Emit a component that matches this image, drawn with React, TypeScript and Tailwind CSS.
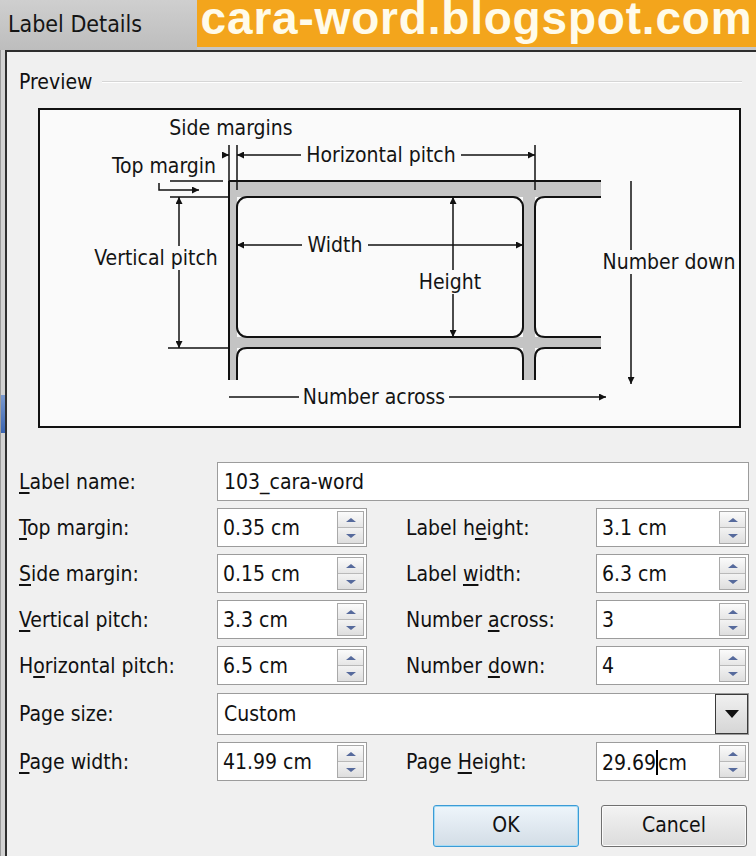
import React from "react";

const UI = "font-['DejaVu_Sans_Condensed','Liberation_Sans',sans-serif]";

function Lbl({ text, u }: { text: string; u?: number }) {
  if (u === undefined) return <span>{text}</span>;
  return (
    <span>
      {text.slice(0, u)}
      <span className="underline underline-offset-[3px]">{text[u]}</span>
      {text.slice(u + 1)}
    </span>
  );
}

function SpinBtns() {
  return (
    <div className="flex w-[27px] flex-col border border-[#a9a9a9] bg-[#f4f4f4]">
      <div className="flex flex-1 items-center justify-center border-b border-[#b9b9b9] bg-gradient-to-b from-[#fbfbfb] to-[#e6e6e6]">
        <div className="h-0 w-0 border-x-[5px] border-b-[4px] border-x-transparent border-b-[#566a9c]" />
      </div>
      <div className="flex flex-1 items-center justify-center bg-gradient-to-b from-[#f3f3f3] to-[#dedede]">
        <div className="h-0 w-0 border-x-[5px] border-t-[4px] border-x-transparent border-t-[#566a9c]" />
      </div>
    </div>
  );
}

function Spin({ value, wide, caret }: { value: string; wide?: boolean; caret?: boolean }) {
  return (
    <div
      className={
        "flex h-[39px] items-stretch border border-[#9c9c9c] bg-white py-[2px] pr-[2px] " +
        (wide ? "w-[153px]" : "w-[150px]")
      }
    >
      <div className="flex flex-1 items-center pl-[5px] pt-[2px] text-[21px] text-[#111]">
        {caret ? (
          <span>
            29.69<span className="inline-block h-[25px] w-[2px] translate-y-[5px] bg-black" />cm
          </span>
        ) : (
          value
        )}
      </div>
      <SpinBtns />
    </div>
  );
}

function Row({
  l,
  lu,
  lv,
  r,
  ru,
  rv,
  caret,
}: {
  l: string;
  lu?: number;
  lv: string;
  r: string;
  ru?: number;
  rv: string;
  caret?: boolean;
}) {
  return (
    <div className="flex h-[39px] items-center">
      <div className="w-[198px] pt-[2px] text-[21px] text-[#111]">
        <Lbl text={l} u={lu} />
      </div>
      <Spin value={lv} />
      <div className="ml-[39px] w-[190px] pt-[2px] text-[21px] text-[#111]">
        <Lbl text={r} u={ru} />
      </div>
      <Spin value={rv} wide caret={caret} />
    </div>
  );
}

function TextBg({ x, y, w, label }: { x: number; y: number; w: number; label: string }) {
  return (
    <g>
      <rect x={x - w / 2} y={y - 12} width={w} height={24} fill="#fafafa" />
      <text x={x} y={y + 7} textAnchor="middle" fontSize="21" fill="#141414">
        {label}
      </text>
    </g>
  );
}

function Diagram() {
  const s = "#111";
  return (
    <svg width="699" height="316" viewBox="40 110 699 316" className="block">
      <defs>
        <marker
          id="ah"
          viewBox="0 0 10 10"
          refX="10"
          refY="5"
          markerWidth="8"
          markerHeight="7"
          markerUnits="userSpaceOnUse"
          orient="auto-start-reverse"
        >
          <path d="M0,0 L10,5 L0,10 z" fill={s} />
        </marker>
      </defs>
      <rect x="40" y="110" width="699" height="316" fill="#fafafa" />
      {/* gray bands */}
      <rect x="229" y="181" width="372" height="16" fill="#c4c4c4" />
      <rect x="229" y="181" width="8" height="199" fill="#c4c4c4" />
      <rect x="523" y="181" width="12" height="199" fill="#c4c4c4" />
      <rect x="229" y="337" width="372" height="11" fill="#c4c4c4" />
      {/* labels */}
      <rect x="237" y="197" width="286" height="140" rx="10" fill="#fafafa" stroke={s} strokeWidth="2" />
      <path d="M601 197 H545 Q535 197 535 207 V327 Q535 337 545 337 H601" fill="#fafafa" stroke={s} strokeWidth="2" />
      <path d="M237 380 V358 Q237 348 247 348 H513 Q523 348 523 358 V380" fill="#fafafa" stroke={s} strokeWidth="2" />
      <path d="M535 380 V358 Q535 348 545 348 H601" fill="#fafafa" stroke={s} strokeWidth="2" />
      <line x1="229" y1="181" x2="601" y2="181" stroke={s} strokeWidth="2" />
      <line x1="229" y1="181" x2="229" y2="380" stroke={s} strokeWidth="2" />

      {/* side margins */}
      <line x1="229" y1="145" x2="229" y2="181" stroke={s} strokeWidth="1.5" />
      <line x1="237" y1="145" x2="237" y2="190" stroke={s} strokeWidth="1.5" />
      <line x1="222" y1="155" x2="229" y2="155" stroke={s} strokeWidth="1.5" markerEnd="url(#ah)" />
      {/* horizontal pitch */}
      <line x1="237" y1="155" x2="535" y2="155" stroke={s} strokeWidth="1.5" markerStart="url(#ah)" markerEnd="url(#ah)" />
      <line x1="535" y1="145" x2="535" y2="190" stroke={s} strokeWidth="1.5" />
      <TextBg x={381} y={155} w={160} label="Horizontal pitch" />
      <text x="231" y="135" textAnchor="middle" fontSize="21" fill="#141414">
        Side margins
      </text>
      {/* top margin */}
      <text x="164" y="173" textAnchor="middle" fontSize="21" fill="#141414">
        Top margin
      </text>
      <line x1="170" y1="181" x2="223" y2="181" stroke={s} strokeWidth="1.5" />
      <path d="M159 183 V190 H199" fill="none" stroke={s} strokeWidth="1.5" markerEnd="url(#ah)" />
      {/* vertical pitch */}
      <line x1="170" y1="197" x2="229" y2="197" stroke={s} strokeWidth="1.5" />
      <line x1="168" y1="348" x2="229" y2="348" stroke={s} strokeWidth="1.5" />
      <line x1="179" y1="197" x2="179" y2="348" stroke={s} strokeWidth="1.5" markerStart="url(#ah)" markerEnd="url(#ah)" />
      <TextBg x={156} y={258} w={128} label="Vertical pitch" />
      {/* width */}
      <line x1="237" y1="245" x2="523" y2="245" stroke={s} strokeWidth="1.5" markerStart="url(#ah)" markerEnd="url(#ah)" />
      <TextBg x={335} y={245} w={66} label="Width" />
      {/* height */}
      <line x1="453" y1="197" x2="453" y2="337" stroke={s} strokeWidth="1.5" markerStart="url(#ah)" markerEnd="url(#ah)" />
      <TextBg x={450} y={282} w={72} label="Height" />
      {/* number down */}
      <line x1="631" y1="181" x2="631" y2="384" stroke={s} strokeWidth="1.5" markerEnd="url(#ah)" />
      <TextBg x={669} y={262} w={136} label="Number down" />
      {/* number across */}
      <line x1="229" y1="397" x2="606" y2="397" stroke={s} strokeWidth="1.5" markerEnd="url(#ah)" />
      <TextBg x={374} y={397} w={150} label="Number across" />
    </svg>
  );
}

export default function App() {
  return (
    <div className={"flex h-[856px] w-[756px] flex-col overflow-hidden bg-[#c6c6c6] " + UI}>
      {/* title bar */}
      <div className="flex h-[50px] shrink-0">
        <div className="w-[197px] bg-gradient-to-b from-[#cfcfcf] to-[#bdbdbd] pl-[8px] text-[23px] leading-[48px] text-[#151515]">
          Label Details
        </div>
        <div className="flex h-[47px] flex-1 items-start justify-center bg-[#f3a51c]">
          <span className="font-['Liberation_Sans',sans-serif] text-[46px] font-bold leading-[36px] tracking-[0.8px] text-[#fffbea]">
            cara-word.blogspot.com
          </span>
        </div>
      </div>
      {/* body */}
      <div className="flex flex-1">
        <div className="flex w-[5px] flex-col border-l border-[#9a9a9a] bg-[#d2d2d2]">
          <div className="mt-[345px] h-[38px] bg-gradient-to-b from-[#7b9ad0] to-[#3a64b0]" />
        </div>
        <div className="flex flex-1 flex-col border-l-2 border-t-2 border-[#2e2e2e] bg-[#f0f0f0] pl-[12px]">
          {/* Preview header */}
          <div className="mt-[18px] flex h-[24px] items-center">
            <span className="pt-[2px] text-[21px] text-[#111]">Preview</span>
            <div className="ml-[10px] mr-[14px] h-[2px] flex-1 border-t border-b border-t-[#d6d6d6] border-b-white" />
          </div>
          {/* Preview box */}
          <div className="ml-[19px] mt-[14px] w-[703px] border-2 border-[#111] bg-[#fafafa]">
            <Diagram />
          </div>
          {/* form */}
          <div className="mt-[34px] flex flex-col">
            <div className="flex h-[39px] items-center">
              <div className="w-[198px] pt-[2px] text-[21px] text-[#111]">
                <Lbl text="Label name:" u={0} />
              </div>
              <div className="flex h-[39px] w-[532px] items-center border border-[#9c9c9c] bg-white pl-[6px] pt-[2px] text-[21px] text-[#111]">
                103_cara-word
              </div>
            </div>
            <div className="mt-[7px] flex flex-col gap-[7px]">
              <Row l="Top margin:" lu={0} lv="0.35 cm" r="Label height:" ru={7} rv="3.1 cm" />
              <Row l="Side margin:" lu={0} lv="0.15 cm" r="Label width:" ru={6} rv="6.3 cm" />
              <Row l="Vertical pitch:" lu={0} lv="3.3 cm" r="Number across:" ru={7} rv="3" />
              <Row l="Horizontal pitch:" lu={1} lv="6.5 cm" r="Number down:" ru={7} rv="4" />
            </div>
            <div className="mt-[8px] flex h-[42px] items-center">
              <div className="w-[198px] pt-[2px] text-[21px] text-[#111]">Page size:</div>
              <div className="flex h-[42px] w-[532px] items-stretch border border-[#9c9c9c] bg-white">
                <div className="flex flex-1 items-center pl-[6px] pt-[2px] text-[21px] text-[#111]">Custom</div>
                <div className="flex w-[33px] items-center justify-center border border-[#3a3a3a] bg-gradient-to-b from-[#f0f0f0] to-[#d6d6d6]">
                  <div className="h-0 w-0 border-x-[7px] border-t-[8px] border-x-transparent border-t-[#111]" />
                </div>
              </div>
            </div>
            <div className="mt-[7px]">
              <Row l="Page width:" lu={0} lv="41.99 cm" r="Page Height:" ru={5} rv="29.69 cm" caret />
            </div>
            <div className="mt-[24px] flex gap-[22px] pl-[414px]">
              <button className="flex h-[42px] w-[146px] items-center justify-center rounded-[3px] border border-[#3c9bd6] bg-gradient-to-b from-[#eef5fb] to-[#d3dde6] text-[21px] text-[#111] shadow-[inset_0_0_0_1px_#a6dcf5]">
                OK
              </button>
              <button className="flex h-[42px] w-[146px] items-center justify-center rounded-[3px] border border-[#707070] bg-gradient-to-b from-[#f3f3f3] to-[#dcdcdc] text-[21px] text-[#111] shadow-[inset_0_0_0_1px_#fbfbfb]">
                Cancel
              </button>
            </div>
          </div>
        </div>
      </div>
    </div>
  );
}
